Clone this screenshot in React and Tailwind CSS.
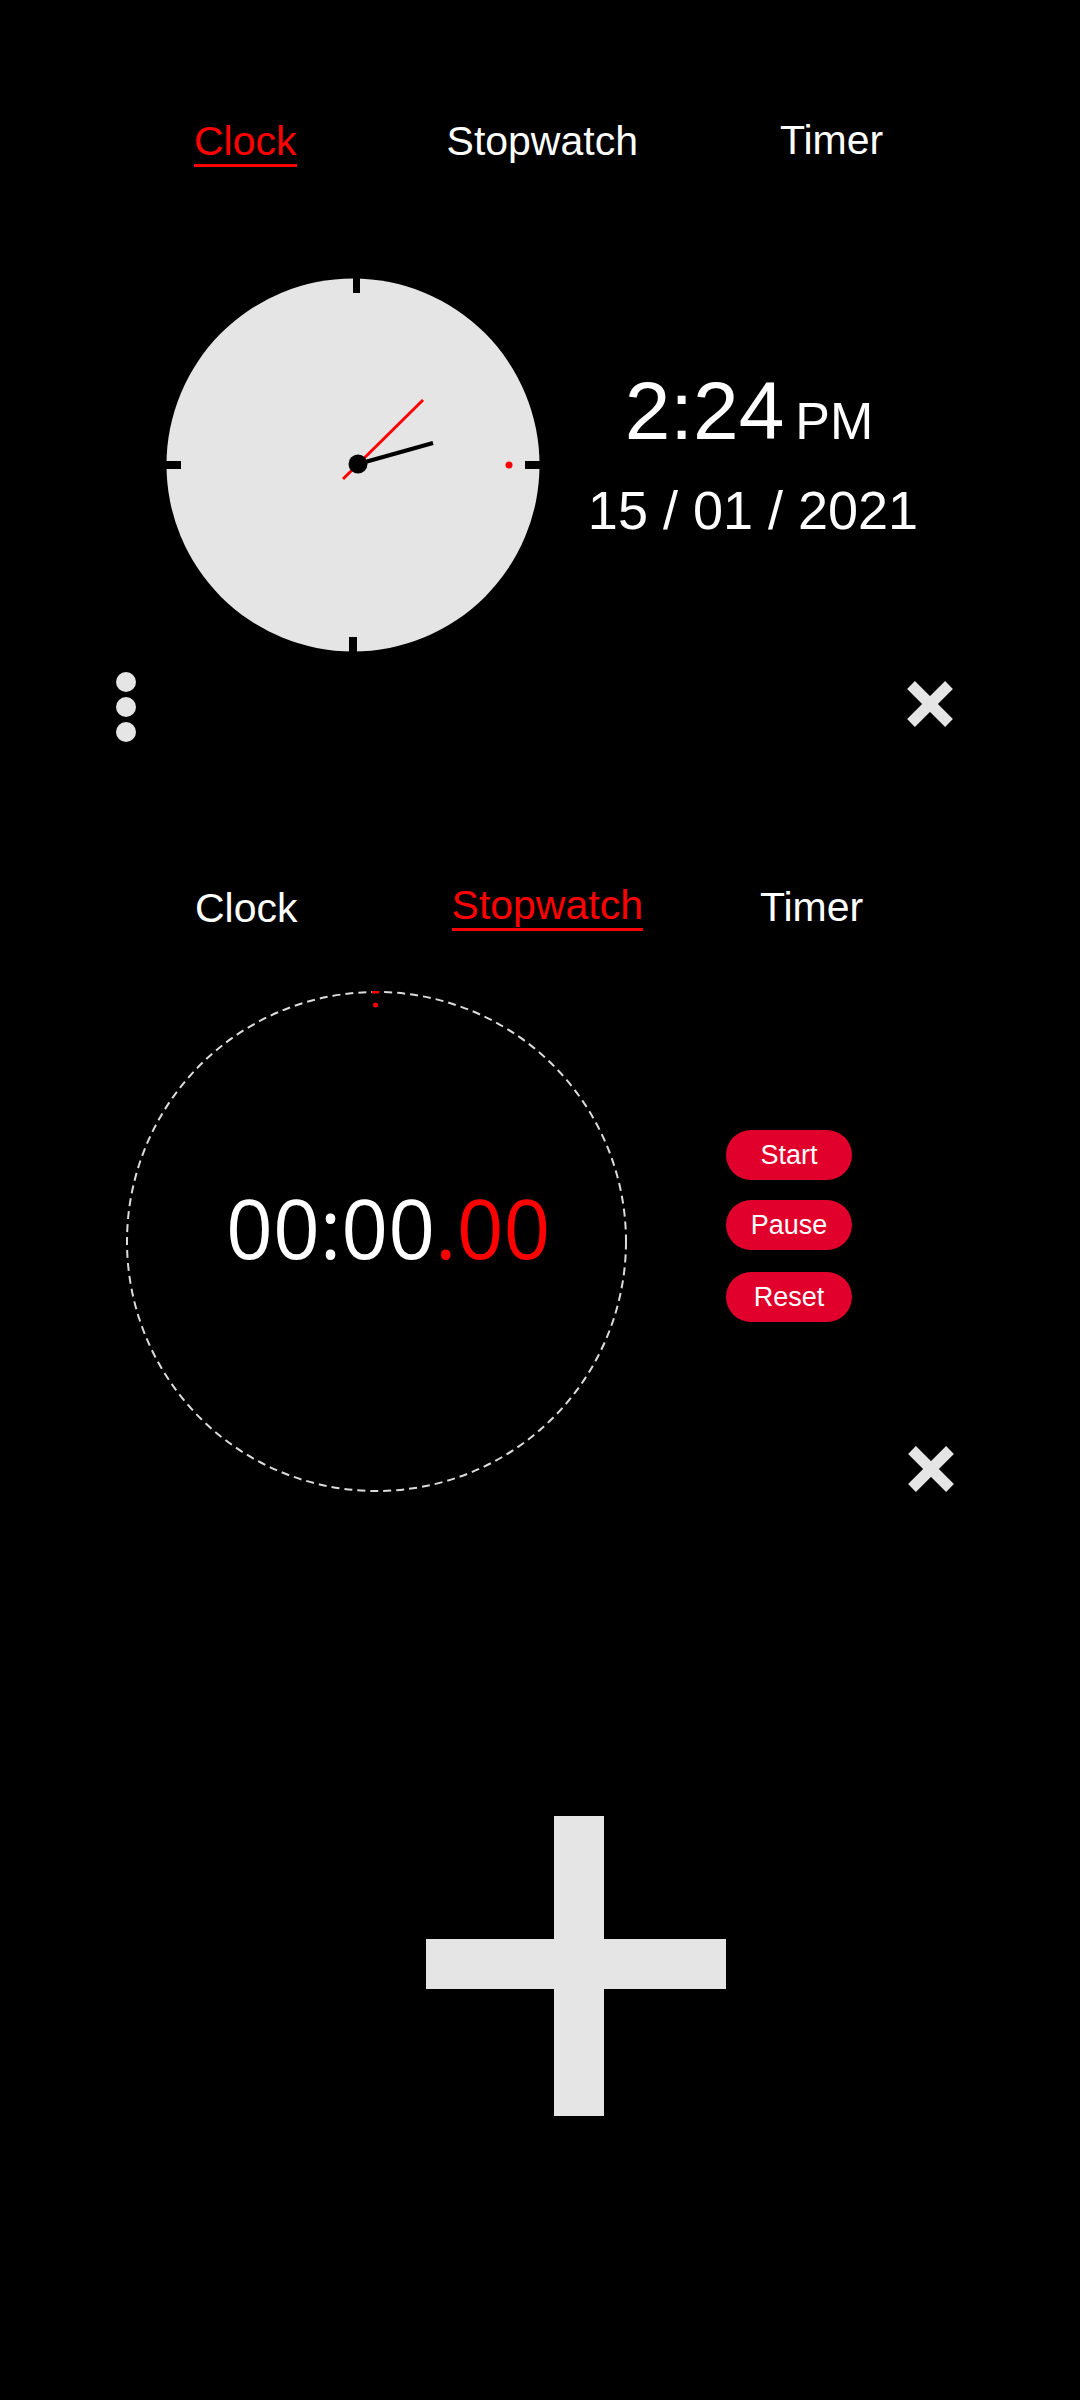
import React from 'react'

const font = "font-['Liberation_Sans',Arial,sans-serif]"

function CloseIcon() {
  return (
    <svg width="46" height="46" viewBox="0 0 46 46">
      <line x1="4" y1="4" x2="42" y2="42" stroke="#e5e5e5" strokeWidth="11" />
      <line x1="42" y1="4" x2="4" y2="42" stroke="#e5e5e5" strokeWidth="11" />
    </svg>
  )
}

function ClockFace() {
  // 373px face, hands pivot slightly right of centre like the reference
  return (
    <svg width="374" height="374" viewBox="0 0 374 374" className="shrink-0">
      <circle cx="187" cy="187" r="186.5" fill="#e5e5e5" />
      <rect x="187" y="0" width="7" height="15" fill="#000" />
      <rect x="183" y="359" width="8" height="15" fill="#000" />
      <rect x="0" y="183" width="15" height="8" fill="#000" />
      <rect x="359" y="183" width="15" height="8" fill="#000" />
      <circle cx="343" cy="187" r="3.5" fill="#ff0000" />
      <line x1="192" y1="186" x2="267" y2="165" stroke="#000" strokeWidth="4" />
      <line x1="177" y1="201" x2="257" y2="122" stroke="#ff0000" strokeWidth="3" />
      <circle cx="192" cy="186" r="9.5" fill="#000" />
    </svg>
  )
}

function Tab({ label, active, className = '' }) {
  return (
    <span
      className={
        'text-[41px] leading-none ' +
        (active ? 'text-[#ff0000] border-b-[3px] border-[#ff0000] pb-[2px] ' : 'text-white ') +
        className
      }>
      {label}
    </span>
  )
}

function PillButton({ children }) {
  return (
    <button className="w-[126px] h-[50px] rounded-full bg-[#e1002b] text-white text-[27px] leading-none">
      {children}
    </button>
  )
}

export default function App() {
  return (
    <main className={`min-h-screen w-[1080px] bg-black overflow-hidden ${font}`}>
      {/* clock panel */}
      <div className="flex items-start pt-[121px] pl-[194px]">
        <Tab label="Clock" active />
        <Tab label="Stopwatch" className="ml-[150px]" />
        <Tab label="Timer" className="ml-[142px] -mt-[1px]" />
      </div>

      <div className="flex items-start mt-[111px] pl-[166px]">
        <ClockFace />
        <div className="ml-[30px] mt-[92px] w-[364px] flex flex-col items-center text-white">
          <div className="flex items-baseline -ml-[6px] text-[82px] leading-none whitespace-nowrap">
            2:24<span className="ml-[11px] text-[52px] leading-none">PM</span>
          </div>
          <div className="mt-[31px] ml-[2px] text-[54px] leading-none whitespace-nowrap">15 / 01 / 2021</div>
        </div>
      </div>

      <div className="flex items-start justify-between mt-[20px] pl-[116px] pr-[127px]">
        <div className="flex flex-col gap-[5px]">
          <span className="w-[20px] h-[20px] rounded-full bg-[#e5e5e5]" />
          <span className="w-[20px] h-[20px] rounded-full bg-[#e5e5e5]" />
          <span className="w-[20px] h-[20px] rounded-full bg-[#e5e5e5]" />
        </div>
        <div className="mt-[9px]">
          <CloseIcon />
        </div>
      </div>

      {/* stopwatch panel */}
      <div className="flex items-start mt-[143px] pl-[195px]">
        <Tab label="Clock" className="mt-[3px]" />
        <Tab label="Stopwatch" active className="ml-[154px]" />
        <Tab label="Timer" className="ml-[117px] mt-[2px]" />
      </div>

      <div className="flex items-start mt-[60px] pl-[126px]">
        <div className="relative w-[501px] h-[501px] shrink-0">
          <svg width="501" height="501" viewBox="0 0 501 501" className="absolute inset-0">
            <circle cx="250.5" cy="250.5" r="249.5" fill="none" stroke="#dcdcdc" strokeWidth="2" strokeDasharray="8 5" />
            <rect x="246" y="0" width="7" height="2.5" fill="#ff0000" />
            <circle cx="249.5" cy="14" r="2.5" fill="#ff0000" />
          </svg>
          <div className="relative pt-[195px] pl-[100px] text-[82px] leading-none text-white font-['Open_Sans',sans-serif] whitespace-nowrap">
            00:00<span className="text-[#ff0000]">.00</span>
          </div>
        </div>

        <div className="ml-[99px] mt-[139px] flex flex-col">
          <PillButton>Start</PillButton>
          <div className="mt-[20px]"><PillButton>Pause</PillButton></div>
          <div className="mt-[22px]"><PillButton>Reset</PillButton></div>
        </div>

        <div className="ml-[56px] mt-[455px]">
          <CloseIcon />
        </div>
      </div>

      {/* add */}
      <div className="mt-[324px] pl-[426px]">
        <svg width="300" height="300" viewBox="0 0 300 300">
          <rect x="128" y="0" width="50" height="300" fill="#e5e5e5" />
          <rect x="0" y="123" width="300" height="50" fill="#e5e5e5" />
        </svg>
      </div>
    </main>
  )
}
